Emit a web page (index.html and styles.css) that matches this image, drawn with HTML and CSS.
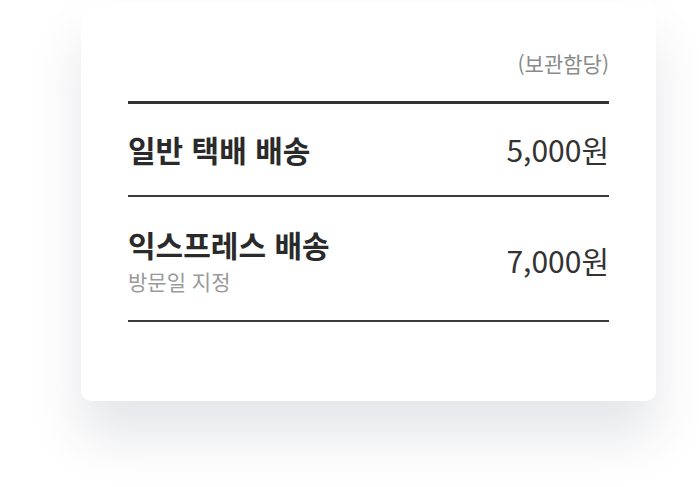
FILE: index.html
```html
<!DOCTYPE html>
<html lang="ko">
<head>
<meta charset="utf-8">
<link rel="stylesheet" href="styles.css">
</head>
<body>
<div class="card">
  <div class="unit">(보관함당)</div>
  <div class="list">
    <div class="row">
      <div class="name"><div class="title">일반 택배 배송</div></div>
      <div class="price">5,000원</div>
    </div>
    <div class="row row-tall">
      <div class="name">
        <div class="title">익스프레스 배송</div>
        <div class="sub">방문일 지정</div>
      </div>
      <div class="price">7,000원</div>
    </div>
  </div>
</div>
</body>
</html>
```
FILE: styles.css
```css
html, body {
  margin: 0;
  padding: 0;
  background: #ffffff;
}
body {
  font-family: "Noto Sans CJK KR", "Noto Sans", sans-serif;
  width: 699px;
  height: 487px;
  overflow: hidden;
}
.card {
  margin: 2px 0 0 81px;
  width: 575px;
  box-sizing: border-box;
  padding: 46px 47px 79px;
  background: #fff;
  border-radius: 10px;
  box-shadow: 0 36px 52px rgba(40, 50, 70, 0.12);
}
.unit {
  text-align: right;
  font-size: 21px;
  line-height: 30px;
  color: #8a8a8a;
  padding-bottom: 23px;
}
.list {
  border-top: 3px solid #333;
}
.row {
  display: flex;
  justify-content: space-between;
  align-items: center;
  border-bottom: 2px solid #3c3c3c;
  padding: 25px 0 26px;
}
.row-tall {
  padding: 27px 0 24px;
}
.title {
  font-size: 30px;
  font-weight: 700;
  line-height: 40px;
  color: #2a2a2a;
}
.sub {
  font-size: 21px;
  line-height: 30px;
  margin-top: 2px;
  color: #9a9a9a;
}
.price {
  font-size: 30px;
  line-height: 40px;
  color: #333;
}
```
